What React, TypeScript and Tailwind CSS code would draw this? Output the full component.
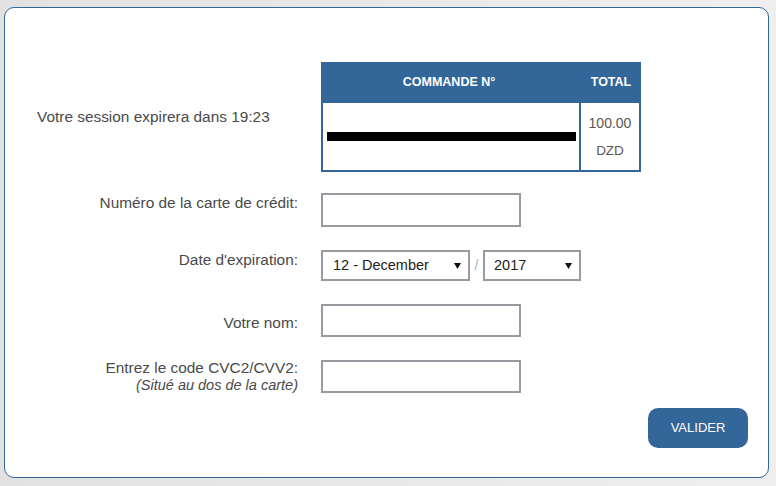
import React from "react";

const Arrow = () => (
  <svg width="7" height="6" viewBox="0 0 7 6" className="shrink-0">
    <path d="M0 0 L7 0 L3.5 6 Z" fill="#111" />
  </svg>
);

export default function App() {
  return (
    <div
      className="w-[776px] h-[486px] bg-gradient-to-r from-[#e2e2e2] to-[#efefef] pt-[7px] pl-[4px]"
      style={{ fontFamily: "'Liberation Sans', Arial, sans-serif" }}
    >
      <div className="w-[765px] h-[471px] bg-white border border-[#336699] rounded-[10px] pt-[54px] pl-[32px] pr-[20px] flex flex-col text-[#4a4a4a]">
        {/* Session + table */}
        <div className="flex items-center">
          <div className="w-[261px] text-[15.4px] leading-[20px]">Votre session expirera dans 19:23</div>
          <div className="ml-[23px] w-[320px] border-2 border-[#336699]">
            <div className="h-[39px] bg-[#336699] flex items-center text-white font-bold text-[12.5px] pb-[3px]">
              <div className="w-[260px] text-center pr-[8px]">COMMANDE N°</div>
              <div className="flex-1 text-center">TOTAL</div>
            </div>
            <div className="h-[67px] flex">
              <div className="w-[258px] border-r-2 border-[#336699] flex items-center pl-[4px] pr-[3px]">
                <div className="h-[9px] w-full bg-black" />
              </div>
              <div className="flex-1 flex flex-col items-center justify-center text-[14px] leading-[28px] text-[#5e5650]">
                <span>100.00</span>
                <span className="text-[13.5px]">DZD</span>
              </div>
            </div>
          </div>
        </div>

        {/* Card number */}
        <div className="flex items-start mt-[21px]">
          <div className="w-[261px] text-right text-[15.4px] leading-[20px]">Numéro de la carte de crédit:</div>
          <div className="ml-[23px] w-[200px] h-[34px] border-2 border-[#9a99a0]" />
        </div>

        {/* Expiration */}
        <div className="flex items-start mt-[23px]">
          <div className="w-[261px] text-right text-[15.4px] leading-[20px]">Date d'expiration:</div>
          <div className="ml-[23px] flex items-center">
            <div className="w-[149px] h-[31px] border-2 border-[#9a99a0] flex items-center justify-between pl-[10px] pr-[7px] text-[14.5px] text-[#222]">
              <span>12 - December</span>
              <Arrow />
            </div>
            <span className="w-[13px] text-center text-[14px] text-[#a8b4c4]">/</span>
            <div className="w-[98px] h-[31px] border-2 border-[#9a99a0] flex items-center justify-between pl-[9px] pr-[7px] text-[14.5px] text-[#222]">
              <span>2017</span>
              <Arrow />
            </div>
          </div>
        </div>

        {/* Name */}
        <div className="flex items-start mt-[23px]">
          <div className="w-[261px] text-right text-[15.4px] leading-[20px] mt-[9px]">Votre nom:</div>
          <div className="ml-[23px] w-[200px] h-[33px] border-2 border-[#9a99a0]" />
        </div>

        {/* CVC */}
        <div className="flex items-start mt-[21px]">
          <div className="w-[261px] text-right">
            <div className="text-[15.4px] leading-[20px]">Entrez le code CVC2/CVV2:</div>
            <div className="text-[14.5px] leading-[18px] italic mt-[-2px]">(Situé au dos de la carte)</div>
          </div>
          <div className="ml-[23px] mt-[2px] w-[200px] h-[33px] border-2 border-[#9a99a0]" />
        </div>

        {/* Button */}
        <div className="flex justify-end mt-[14px]">
          <button className="w-[100px] h-[40px] rounded-[10px] bg-[#336699] text-white text-[13px]">VALIDER</button>
        </div>
      </div>
    </div>
  );
}
